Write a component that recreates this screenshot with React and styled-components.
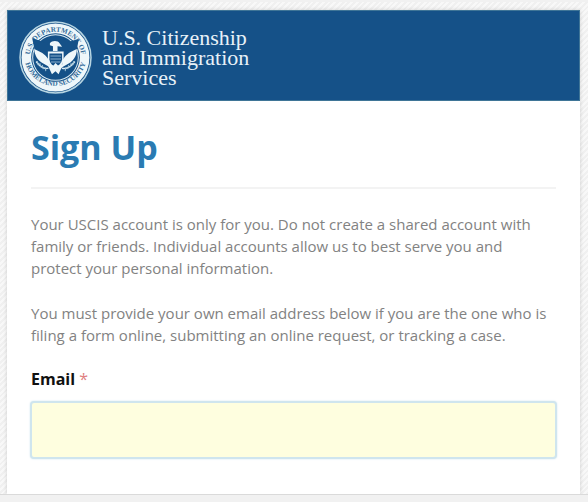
import React from "react";
import styled, { createGlobalStyle } from "styled-components";

const GlobalStyle = createGlobalStyle`
  *, *::before, *::after { box-sizing: border-box; }
  body { margin: 0; background: #f1f1f1; font-family: "Open Sans", "Noto Sans", sans-serif; }
`;

const Page = styled.div`
  display: flex;
  flex-direction: column;
  min-height: 100vh;
`;

const Backdrop = styled.div`
  display: flex;
  flex: 1;
  margin-top: 2px;
  padding: 8px 8px 0 7px;
  background: repeating-linear-gradient(135deg, #f8f8f8 0 2px, #f0f0f0 2px 4px);
`;

const Card = styled.main`
  flex: 1;
  min-width: 0;
  background: #fff;
  box-shadow: 0 0 4px rgba(0, 0, 0, 0.16);
`;

const Header = styled.header`
  display: flex;
  align-items: center;
  gap: 10px;
  padding: 10px 12px 6px 11px;
  background: #155188;
  border: 1px solid #3f7597;
`;

const Seal = styled.svg`
  display: block;
  flex: none;
  width: 73px;
  height: 73px;
`;

const Agency = styled.div`
  color: #e8f1f8;
  font: 22px/20px "Liberation Serif", serif;
`;

const Content = styled.div`
  padding: 24px 23px 34px;
`;

const Title = styled.h1`
  margin: 0 1px;
  color: #2a7bb2;
  font-size: 34px;
  font-weight: 700;
  line-height: 44px;
`;

const Divider = styled.hr`
  height: 2px;
  margin: 18px 1px 24px;
  border: 0;
  background: #f3f3f3;
`;

const Paragraph = styled.p`
  margin: 0 1px 23px;
  color: #828282;
  font-size: 15px;
  font-weight: 400;
  line-height: 22px;
`;

const Label = styled.label`
  display: block;
  margin: 0 1px 12px;
  color: #111;
  font-size: 16px;
  font-weight: 700;
  line-height: 20px;
`;

const Required = styled.span`
  color: #e08080;
  font-weight: 400;
`;

const EmailInput = styled.input`
  display: block;
  width: 100%;
  height: 58px;
  padding: 0 16px;
  border: 2px solid #cfe5ee;
  border-radius: 4px;
  outline: none;
  background: #fefedf;
  box-shadow: 0 0 2px #cfe5ee;
  font: inherit;
`;

const BottomBar = styled.footer`
  height: 8px;
  border-top: 1px solid #dadada;
  background: #f1f1f1;
`;

const feathers = [0, 1, 2, 3];

function DhsSeal() {
  return (
    <Seal viewBox="0 0 144 144" role="img" aria-label="U.S. Department of Homeland Security seal">
      <defs>
        <path id="seal-top" d="M28 98A51 51 0 1 1 116 98" />
        <path id="seal-bottom" d="M10 66A62 62 0 1 0 134 66" />
      </defs>
      <circle cx="72" cy="72" r="70" fill="#155188" stroke="#b7d5e2" strokeWidth="3" />
      <circle cx="72" cy="72" r="67" fill="#eff7fa" />
      <circle cx="72" cy="72" r="48" fill="#155188" />
      <circle cx="72" cy="72" r="45" fill="none" stroke="#dcebf2" strokeWidth="2" />
      <g fill="#326b99" fontFamily="Liberation Serif, serif" fontWeight="700">
        <text textAnchor="middle" fontSize="14">
          <textPath href="#seal-top" startOffset="50%">U.S. DEPARTMENT OF</textPath>
        </text>
        <text textAnchor="middle" fontSize="14">
          <textPath href="#seal-bottom" startOffset="50%">HOMELAND SECURITY</textPath>
        </text>
      </g>
      <path fill="#155188" d="M26 34L48 41L62 53L65 41L79 39L83 53L96 42L118 35L114 57L104 75L88 88L57 88L40 76L31 58Z" />
      <path fill="#eff7fa" d="M61 44C65 38 77 38 80 44L85 51L76 50L76 59L67 59L67 50L61 48Z" />
      <path fill="#eff7fa" d="M30 55C41 60 52 64 59 77L61 91L48 84C36 77 31 68 30 55ZM114 55C103 60 93 64 86 77L85 91L98 84C110 76 114 67 114 55Z" />
      <path fill="#eff7fa" d="M57 60H88V76C87 86 81 92 72 96C63 92 58 86 57 76Z" />
      <path fill="#155188" d="M60 64H85V76C84 83 79 88 72 92C65 88 61 83 60 76Z" />
      <path stroke="#8bb0cb" strokeWidth="2" d="M62 69H83M62 75H83M63 81H82" />
      <path fill="#eff7fa" d="M56 85L68 88L72 83L77 88L90 85L83 94L78 105L72 99L65 105L60 94Z" />
      <path fill="none" stroke="#dcebf2" strokeWidth="3" d="M58 93C48 96 41 90 34 80M85 93C96 96 103 90 110 80" />
      <g stroke="#9dc0d4" strokeWidth="2">
        {feathers.map((n) => (
          <path key={n} d={`M${36 + n * 5} ${79 + n * 4}l2 8M${108 - n * 5} ${79 + n * 4}l-2 8`} />
        ))}
      </g>
    </Seal>
  );
}

export default function App() {
  return (
    <>
      <GlobalStyle />
      <Page>
        <Backdrop>
          <Card>
            <Header>
              <DhsSeal />
              <Agency>
                U.S. Citizenship
                <br />
                and Immigration
                <br />
                Services
              </Agency>
            </Header>
            <Content>
              <Title>Sign Up</Title>
              <Divider />
              <Paragraph>
                Your USCIS account is only for you. Do not create a shared account with family or
                friends. Individual accounts allow us to best serve you and protect your personal
                information.
              </Paragraph>
              <Paragraph>
                You must provide your own email address below if you are the one who is filing a
                form online, submitting an online request, or tracking a case.
              </Paragraph>
              <form>
                <Label htmlFor="email">
                  Email <Required>*</Required>
                </Label>
                <EmailInput id="email" name="email" type="email" required />
              </form>
            </Content>
          </Card>
        </Backdrop>
        <BottomBar />
      </Page>
    </>
  );
}
